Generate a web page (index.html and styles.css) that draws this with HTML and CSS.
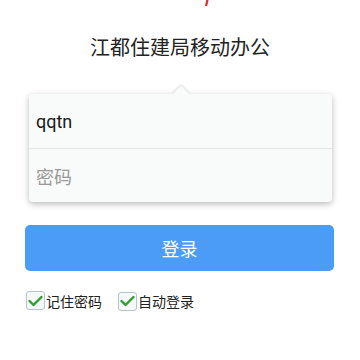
FILE: index.html
```html
<!DOCTYPE html>
<html lang="zh">
<head>
<meta charset="utf-8">
<link rel="stylesheet" href="styles.css">
</head>
<body>
<div class="logo">
  <svg width="360" height="10" viewBox="0 0 360 10"><path d="M207.5 0 L206 6" stroke="#e8262a" stroke-width="2.2" fill="none"/></svg>
</div>
<h1 class="title">江都住建局移动办公</h1>
<div class="card">
  <div class="arrow"></div>
  <div class="row"><span class="value">qqtn</span></div>
  <div class="row"><span class="placeholder">密码</span></div>
</div>
<button class="login">登录</button>
<div class="options">
  <label class="opt"><span class="box"><svg width="15" height="12" viewBox="0 0 15 12"><path d="M1.5 6 L5.5 10 L13.5 2" stroke="#2aa12a" stroke-width="2.4" fill="none" stroke-linecap="round" stroke-linejoin="round"/></svg></span>记住密码</label>
  <label class="opt opt2"><span class="box"><svg width="15" height="12" viewBox="0 0 15 12"><path d="M1.5 6 L5.5 10 L13.5 2" stroke="#2aa12a" stroke-width="2.4" fill="none" stroke-linecap="round" stroke-linejoin="round"/></svg></span>自动登录</label>
</div>
</body>
</html>
```
FILE: styles.css
```css
html, body {
  margin: 0;
  padding: 0;
  background: #fff;
  font-family: Roboto, "Noto Sans CJK SC", sans-serif;
}
.logo {
  height: 34px;
}
.logo svg { display: block; }
.title {
  margin: 0;
  text-align: center;
  font-size: 20px;
  line-height: 28px;
  font-weight: normal;
  color: #222;
}
.card {
  position: relative;
  margin: 32px 28px 0 29px;
  background: #f9fafa;
  border-radius: 4px;
  box-shadow: 0 2px 6px rgba(0,0,0,0.28);
}
.arrow {
  position: absolute;
  top: -6px;
  left: 146px;
  width: 12px;
  height: 12px;
  background: #f9fafa;
  transform: rotate(45deg);
  box-shadow: -1px -1px 2px rgba(0,0,0,0.12);
}
.row {
  position: relative;
  height: 54px;
  display: flex;
  align-items: center;
  padding-left: 7px;
  font-size: 18px;
}
.row + .row {
  border-top: 1px solid #e4e6e6;
  height: 53px;
}
.value { color: #1a1a1a; }
.placeholder { color: #999; }
.login {
  display: block;
  margin: 23px 26px 0 25px;
  width: calc(100% - 51px);
  height: 46px;
  border: none;
  border-radius: 5px;
  background: #4b9cf6;
  color: #fff;
  font-size: 18px;
  font-family: Roboto, "Noto Sans CJK SC", sans-serif;
}
.options {
  display: flex;
  margin: 19px 0 0 26px;
  gap: 16px;
}
.opt {
  display: flex;
  align-items: center;
  font-size: 14px;
  color: #222;
}
.opt2 { margin-top: 1px; }
.box {
  width: 17px;
  height: 17px;
  border: 1px solid #b5c4d3;
  border-radius: 3px;
  background: #f6f8fa;
  display: flex;
  align-items: center;
  justify-content: center;
  margin-right: 1px;
}
```
